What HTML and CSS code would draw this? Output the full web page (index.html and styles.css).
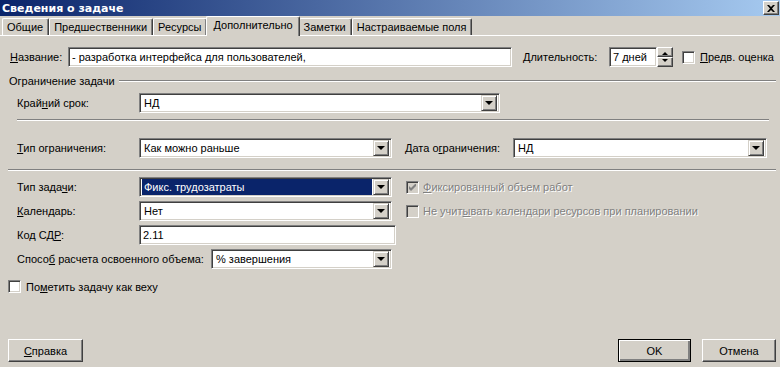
FILE: index.html
```html
<!DOCTYPE html>
<html lang="ru">
<head>
  <meta charset="UTF-8" />
  <title>Сведения о задаче</title>
  <link rel="stylesheet" href="styles.css">
</head>
<body>
  <div class="dialog">
    <div class="titlebar">
      <span class="title">Сведения о задаче</span>
      <span class="close">
        <svg width="8" height="7" viewBox="0 0 8 7" aria-hidden="true">
          <path d="M0 0h2l2 2 2-2h2L5 3.5 8 7H6L4 5 2 7H0l3-3.5z" fill="#000"/>
        </svg>
      </span>
    </div>

    <div class="tabs">
      <div class="tab">Общие</div>
      <div class="tab">Предшественники</div>
      <div class="tab">Ресурсы</div>
      <div class="tab active">Дополнительно</div>
      <div class="tab">Заметки</div>
      <div class="tab">Настраиваемые поля</div>
    </div>

    <div class="panel">
      <div class="name-row">
        <label class="lbl-name"><u>Н</u>азвание:</label>
        <div class="field w-name">- разработка интерфейса для пользователей,</div>
        <label class="lbl-dur"><u>Д</u>лительность:</label>
        <div class="field w-dur">7 дней</div>
        <div class="spin">
          <span class="spin-btn"><i class="arr-up"></i></span>
          <span class="spin-btn"><i class="arr-down"></i></span>
        </div>
        <span class="cb cb-est"></span>
        <label class="cb-text"><u>П</u>редв. оценка</label>
      </div>

      <div class="group-title">
        <span>Ограничение задачи</span>
        <span class="etched"></span>
      </div>

      <div class="form-row row-deadline">
        <label class="lbl">Край<u>н</u>ий срок:</label>
        <div class="combo w-deadline">
          <span class="val">НД</span>
          <span class="drop"><i class="arr-down"></i></span>
        </div>
      </div>

      <div class="sep sep-inner"></div>

      <div class="form-row row-constraint">
        <label class="lbl"><u>Т</u>ип ограничения:</label>
        <div class="combo w-std">
          <span class="val">Как можно раньше</span>
          <span class="drop"><i class="arr-down"></i></span>
        </div>
        <label class="lbl-date">Дата о<u>г</u>раничения:</label>
        <div class="combo w-date">
          <span class="val">НД</span>
          <span class="drop"><i class="arr-down"></i></span>
        </div>
      </div>

      <div class="sep"></div>

      <div class="task-block">
        <div class="form-row">
          <label class="lbl">Тип зада<u>ч</u>и:</label>
          <div class="combo w-std">
            <span class="val selected">Фикс. трудозатраты</span>
            <span class="drop"><i class="arr-down"></i></span>
          </div>
          <span class="cb cb-disabled checked opt">
            <svg width="7" height="7" viewBox="0 0 7 7" aria-hidden="true">
              <path d="M0 2v3l2 2 5-5V-1L2 4z" fill="#808080"/>
            </svg>
          </span>
          <label class="cb-text disabled"><u>Ф</u>иксированный объем работ</label>
        </div>
        <div class="form-row">
          <label class="lbl"><u>К</u>алендарь:</label>
          <div class="combo w-std">
            <span class="val">Нет</span>
            <span class="drop"><i class="arr-down"></i></span>
          </div>
          <span class="cb cb-disabled opt"></span>
          <label class="cb-text disabled">Не учит<u>ы</u>вать календари ресурсов при планировании</label>
        </div>
        <div class="form-row">
          <label class="lbl">Код СД<u>Р</u>:</label>
          <div class="field w-wbs">2.11</div>
        </div>
        <div class="form-row">
          <label class="lbl-ev">Спосо<u>б</u> расчета освоенного объема:</label>
          <div class="combo w-ev">
            <span class="val">% завершения</span>
            <span class="drop"><i class="arr-down"></i></span>
          </div>
        </div>
      </div>

      <div class="milestone">
        <span class="cb"></span>
        <label class="cb-text">По<u>м</u>етить задачу как веху</label>
      </div>
    </div>

    <div class="footer">
      <button class="btn btn-help"><u>С</u>правка</button>
      <div class="footer-right">
        <button class="btn btn-default">OK</button>
        <button class="btn">Отмена</button>
      </div>
    </div>
  </div>
</body>
</html>
```

FILE: styles.css
```css
* {
  box-sizing: border-box;
}

html, body {
  margin: 0;
}

body {
  width: 780px;
  height: 367px;
  overflow: hidden;
  background: #d4d0c8;
  font-family: "Liberation Sans", Arial, sans-serif;
  font-size: 11px;
  color: #000;
}

u {
  text-decoration: underline;
  text-underline-offset: 1px;
}

.dialog {
  display: flex;
  flex-direction: column;
  height: 367px;
}

/* Barre de titre */
.titlebar {
  flex: none;
  height: 16px;
  display: flex;
  align-items: center;
  justify-content: space-between;
  padding: 0 1px 0 2px;
  background: linear-gradient(to right, #0a246a, #a6caf0);
}
.title {
  color: #fff;
  font-family: "DejaVu Sans", sans-serif;
  font-weight: bold;
  font-size: 11px;
}
.close {
  width: 16px;
  height: 14px;
  display: flex;
  align-items: center;
  justify-content: center;
  background: #d4d0c8;
  border: 1px solid;
  border-color: #fff #404040 #404040 #fff;
  box-shadow: inset -1px -1px 0 #808080;
}

/* Onglets */
.tabs {
  flex: none;
  height: 20px;
  display: flex;
  align-items: flex-end;
  padding-left: 2px;
  border-bottom: 1px solid #fff;
}
.tab {
  height: 17px;
  display: flex;
  align-items: center;
  padding: 0 5px 1px 4px;
  border-top: 1px solid #fff;
  border-left: 1px solid #fff;
  border-right: 1px solid #404040;
  box-shadow: inset -1px 0 0 #808080;
  border-radius: 2px 2px 0 0;
  white-space: nowrap;
}
.tab.active {
  height: 20px;
  margin: 0 -1px -1px -1px;
  padding: 0 6px 4px 6px;
  background: #d4d0c8;
  position: relative;
  z-index: 1;
}

/* Panneau */
.panel {
  flex: 1;
  display: flex;
  flex-direction: column;
  padding: 0 4px 0 8px;
}

.name-row {
  display: flex;
  align-items: center;
  height: 20px;
  margin-top: 11px;
  padding-left: 2px;
}
.lbl-name {
  width: 58px;
}
.lbl-dur {
  width: 86px;
  margin-left: 11px;
}

.field {
  height: 20px;
  display: flex;
  align-items: center;
  padding-left: 3px;
  background: #fff;
  border: 1px solid;
  border-color: #808080 #fff #fff #808080;
  box-shadow: inset 1px 1px 0 #404040, inset -1px -1px 0 #d4d0c8;
  white-space: nowrap;
  overflow: hidden;
}
.w-name { width: 444px; }
.w-dur { width: 48px; }
.w-wbs { width: 257px; }

.spin {
  width: 16px;
  height: 20px;
  display: flex;
  flex-direction: column;
}
.spin-btn {
  flex: 1;
  display: flex;
  align-items: center;
  justify-content: center;
  background: #d4d0c8;
  border: 1px solid;
  border-color: #fff #404040 #404040 #fff;
  box-shadow: inset -1px -1px 0 #808080;
}
.spin-btn .arr-up,
.spin-btn .arr-down {
  border-width: 3px;
}

.arr-down,
.arr-up {
  width: 0;
  height: 0;
  border-style: solid;
  border-width: 4px;
  border-color: transparent;
}
.arr-down {
  border-top-color: #000;
  border-bottom-width: 0;
}
.arr-up {
  border-bottom-color: #000;
  border-top-width: 0;
}

.cb {
  flex: none;
  width: 13px;
  height: 13px;
  display: flex;
  align-items: center;
  justify-content: center;
  background: #fff;
  border: 1px solid;
  border-color: #808080 #fff #fff #808080;
  box-shadow: inset 1px 1px 0 #404040, inset -1px -1px 0 #d4d0c8;
}
.cb-disabled {
  background: #d4d0c8;
}
.cb-est {
  margin-left: 9px;
}
.cb-text {
  margin-left: 5px;
  white-space: nowrap;
}
.cb-text.disabled {
  margin-left: 4px;
  color: #808080;
  text-shadow: 1px 1px 0 #fff;
}

/* Groupe */
.group-title {
  display: flex;
  align-items: center;
  height: 13px;
  margin-top: 7px;
  padding-left: 1px;
}
.group-title .etched {
  flex: 1;
  margin-left: 4px;
  border-top: 1px solid #808080;
  border-bottom: 1px solid #fff;
}

.sep {
  height: 2px;
  margin-top: 11px;
  border-top: 1px solid #808080;
  border-bottom: 1px solid #fff;
}
.sep-inner {
  margin: 6px 7px 0 9px;
}

.form-row {
  display: flex;
  align-items: center;
  height: 20px;
  padding-left: 9px;
}
.row-deadline {
  margin-top: 6px;
}
.row-constraint {
  margin-top: 17px;
}
.lbl {
  width: 122px;
  flex: none;
}
.lbl-date {
  width: 108px;
  margin-left: 13px;
}
.lbl-ev {
  width: 194px;
  flex: none;
  white-space: nowrap;
}

.combo {
  height: 20px;
  display: flex;
  align-items: center;
  padding: 0 2px 0 2px;
  background: #fff;
  border: 1px solid;
  border-color: #808080 #fff #fff #808080;
  box-shadow: inset 1px 1px 0 #404040, inset -1px -1px 0 #d4d0c8;
}
.combo .val {
  flex: 1;
  height: 16px;
  display: flex;
  align-items: center;
  padding-left: 2px;
  margin-right: 1px;
  white-space: nowrap;
}
.combo .val.selected {
  background: #0a246a;
  color: #fff;
}
.combo .drop {
  width: 16px;
  height: 16px;
  display: flex;
  align-items: center;
  justify-content: center;
  background: #d4d0c8;
  border: 1px solid;
  border-color: #d4d0c8 #404040 #404040 #d4d0c8;
  box-shadow: inset 1px 1px 0 #fff, inset -1px -1px 0 #808080;
}
.w-deadline { width: 361px; }
.w-std { width: 253px; }
.w-date { width: 254px; }
.w-ev { width: 181px; }

.task-block {
  display: flex;
  flex-direction: column;
  gap: 4px;
  margin-top: 6px;
}
.opt {
  margin-left: 14px;
}

.milestone {
  display: flex;
  align-items: center;
  margin-top: 11px;
}

/* Boutons */
.footer {
  flex: none;
  display: flex;
  justify-content: space-between;
  padding: 0 4px 5px 8px;
}
.footer-right {
  display: flex;
  gap: 11px;
}
.btn {
  height: 23px;
  width: 74px;
  padding: 0;
  font-family: inherit;
  font-size: 11px;
  color: #000;
  background: #d4d0c8;
  border: 1px solid;
  border-color: #fff #404040 #404040 #fff;
  box-shadow: inset -1px -1px 0 #808080;
}
.btn-help {
  width: 75px;
}
.btn-default {
  width: 73px;
  border: 1px solid #000;
  box-shadow: inset 1px 1px 0 #fff, inset -2px -2px 0 #808080;
}
```
